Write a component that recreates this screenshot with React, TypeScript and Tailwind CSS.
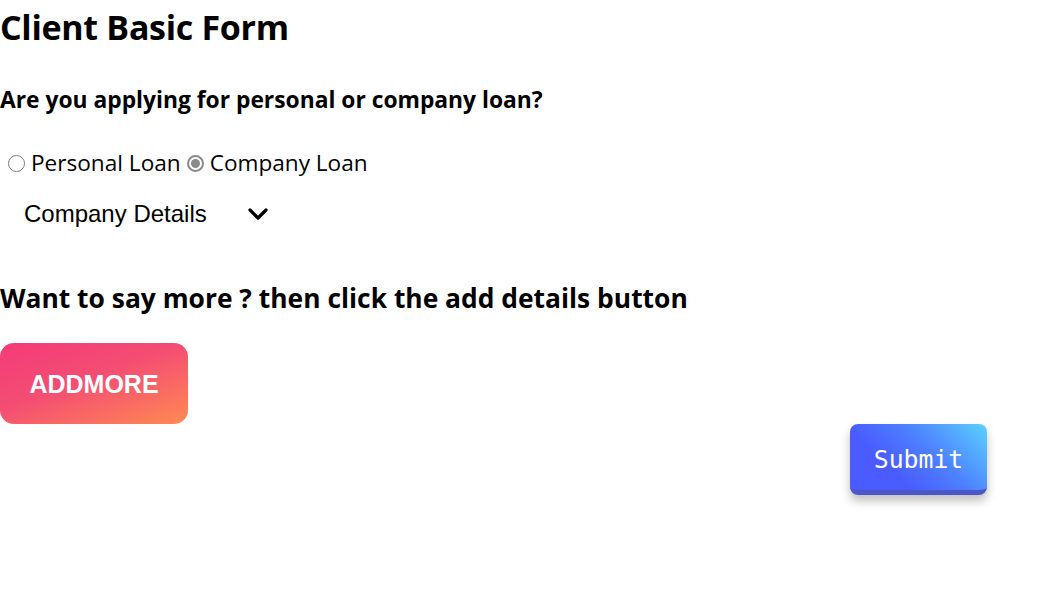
import { ChevronDown } from 'lucide-react'

const Radio = ({ checked, label }: { checked?: boolean; label: string }) => (
  <label className="flex items-center gap-[6px]">
    {checked ? (
      <span className="flex h-[17px] w-[17px] items-center justify-center rounded-full border-[2px] border-[#8a8a8a] bg-white">
        <span className="h-[9px] w-[9px] rounded-full bg-[#8a8a8a]" />
      </span>
    ) : (
      <span className="h-[17px] w-[17px] rounded-full border border-[#7a7a7a] bg-white" />
    )}
    <span>{label}</span>
  </label>
)

const App = () => {
  return (
    <div className="min-h-[614px] bg-white text-black font-['Open_Sans',sans-serif]">
      <h1 className="pt-[4px] text-[34px] font-bold leading-[46px] tracking-[-0.3px]">Client Basic Form</h1>

      <h3 className="mt-[35px] text-[22.8px] font-bold leading-[30px]">
        Are you applying for personal or company loan?
      </h3>

      <div className="mt-[33px] flex items-center gap-[6px] pl-[8px] text-[22.6px] leading-[30px]">
        <Radio label="Personal Loan" />
        <Radio checked label="Company Loan" />
      </div>

      <div className="mt-[20px] flex items-center pl-[24px] font-['Liberation_Sans',sans-serif] text-[24px] leading-[32px]">
        <span>Company Details</span>
        <ChevronDown className="ml-[35px]" size={32} strokeWidth={2.4} />
      </div>

      <h2 className="mt-[50px] text-[26.4px] font-bold leading-[36px]">
        Want to say more ? then click the add details button
      </h2>

      <button className="mt-[27px] flex h-[81px] w-[188px] items-center justify-center rounded-[14px] bg-[linear-gradient(160deg,#f43b78_0%,#f44d73_45%,#ff8a52_100%)] pt-[3px] font-['Liberation_Sans',sans-serif] text-[25px] font-bold text-white">
        ADDMORE
      </button>

      <div className="flex justify-end pr-[68px]">
        <button className="h-[71px] w-[137px] rounded-[8px] border-b-[5px] border-[#4b57c9] bg-[linear-gradient(225deg,#5ad2ff_0%,#4d82ff_40%,#4a5cff_70%)] pt-[6px] font-['DejaVu_Sans_Mono',monospace] text-[24.8px] text-white shadow-[0_6px_10px_rgba(0,0,0,0.25)]">
          Submit
        </button>
      </div>
    </div>
  )
}

export default App
